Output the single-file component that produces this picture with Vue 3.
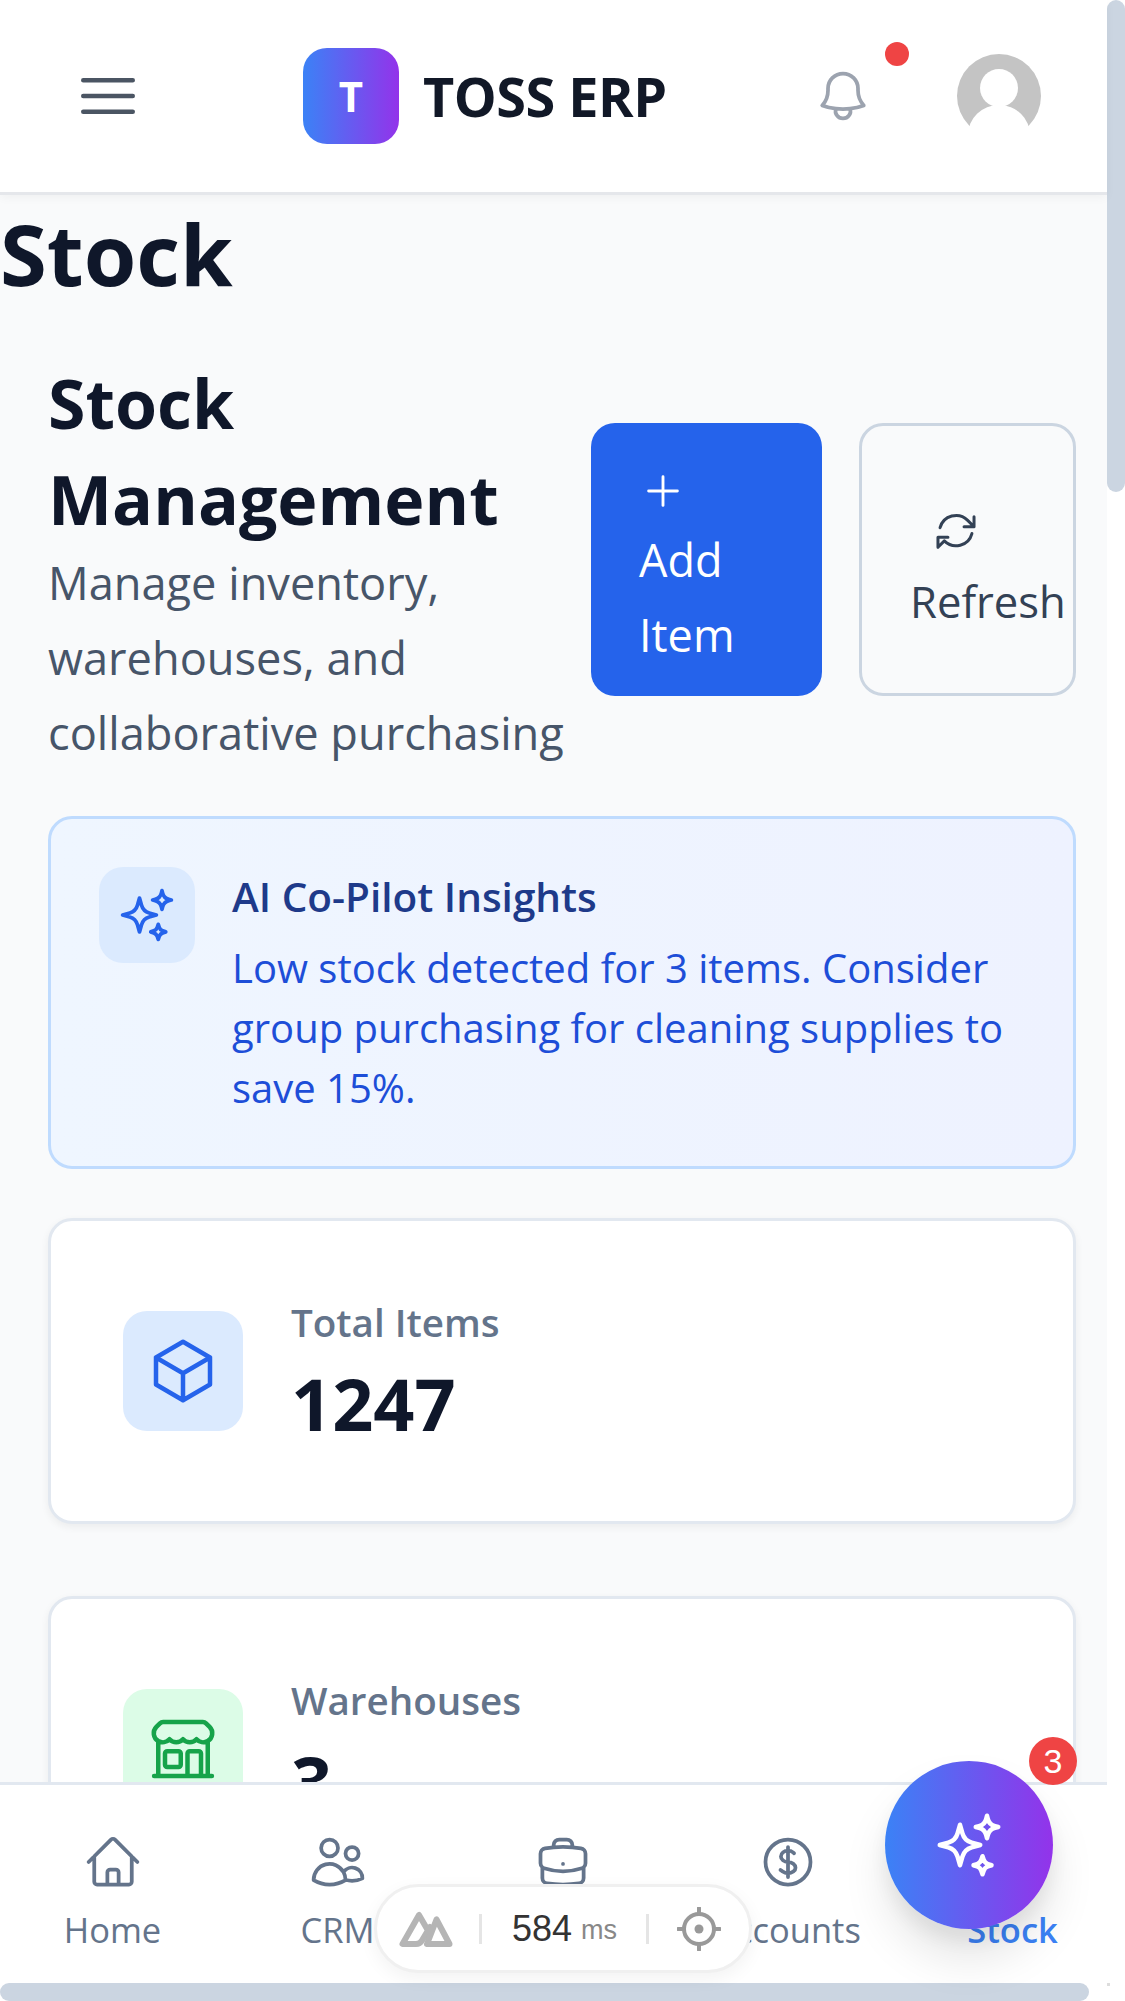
<script setup>
// heroicons outline paths
const icons = {
  home: 'm2.25 12 8.954-8.955c.44-.439 1.152-.439 1.591 0L21.75 12M4.5 9.75v10.125c0 .621.504 1.125 1.125 1.125H9.75v-4.875c0-.621.504-1.125 1.125-1.125h2.25c.621 0 1.125.504 1.125 1.125V21h4.125c.621 0 1.125-.504 1.125-1.125V9.75M8.25 21h8.25',
  users: 'M15 19.128a9.38 9.38 0 0 0 2.625.372 9.337 9.337 0 0 0 4.121-.952 4.125 4.125 0 0 0-7.533-2.493M15 19.128v-.003c0-1.113-.285-2.16-.786-3.07M15 19.128v.106A12.318 12.318 0 0 1 8.624 21c-2.331 0-4.512-.645-6.374-1.766l-.001-.109a6.375 6.375 0 0 1 11.964-3.07M12 6.375a3.375 3.375 0 1 1-6.75 0 3.375 3.375 0 0 1 6.75 0Zm8.25 2.25a2.625 2.625 0 1 1-5.25 0 2.625 2.625 0 0 1 5.25 0Z',
  briefcase: 'M20.25 14.15v4.25c0 1.094-.787 2.036-1.872 2.18-2.087.277-4.216.42-6.378.42s-4.291-.143-6.378-.42c-1.085-.144-1.872-1.086-1.872-2.18v-4.25m16.5 0a2.18 2.18 0 0 0 .75-1.661V8.706c0-1.081-.768-2.015-1.837-2.175a48.114 48.114 0 0 0-3.413-.387m4.5 8.006c-.194.165-.42.295-.673.38A23.978 23.978 0 0 1 12 15.75c-2.648 0-5.195-.429-7.577-1.22a2.016 2.016 0 0 1-.673-.38m0 0A2.18 2.18 0 0 1 3 12.489V8.706c0-1.081.768-2.015 1.837-2.175a48.111 48.111 0 0 1 3.413-.387m7.5 0V5.25A2.25 2.25 0 0 0 13.5 3h-3a2.25 2.25 0 0 0-2.25 2.25v.894m7.5 0a48.667 48.667 0 0 0-7.5 0M12 12.75h.008v.008H12v-.008Z',
  dollar: 'M12 6v12m-3-2.818.879.659c1.171.879 3.07.879 4.242 0 1.172-.879 1.172-2.303 0-3.182C13.536 12.219 12.768 12 12 12c-.725 0-1.45-.22-2.003-.659-1.106-.879-1.106-2.303 0-3.182s2.9-.879 4.006 0l.415.33M21 12a9 9 0 1 1-18 0 9 9 0 0 1 18 0Z',
  cube: 'm21 7.5-9-5.25L3 7.5m18 0-9 5.25m9-5.25v9l-9 5.25M3 7.5l9 5.25M3 7.5v9l9 5.25m0-9v9',
  store: 'M13.5 21v-7.5a.75.75 0 0 1 .75-.75h3a.75.75 0 0 1 .75.75V21m-4.5 0H2.36m11.14 0H18m0 0h3.64m-1.39 0V9.349M3.75 21V9.349m0 0a3.001 3.001 0 0 0 3.75-.615A2.993 2.993 0 0 0 9.75 9.75c.896 0 1.7-.393 2.25-1.016a2.993 2.993 0 0 0 2.25 1.016c.896 0 1.7-.393 2.25-1.015a3.001 3.001 0 0 0 3.75.614m-16.5 0a3.004 3.004 0 0 1-.621-4.72l1.189-1.19A1.5 1.5 0 0 1 5.378 3h13.243a1.5 1.5 0 0 1 1.06.44l1.19 1.189a3 3 0 0 1-.621 4.72M6.75 18h3.75a.75.75 0 0 0 .75-.75V13.5a.75.75 0 0 0-.75-.75H6.75a.75.75 0 0 0-.75.75v3.75c0 .414.336.75.75.75Z',
  sparkles: 'M9.813 15.904 9 18.75l-.813-2.846a4.5 4.5 0 0 0-3.09-3.09L2.25 12l2.846-.813a4.5 4.5 0 0 0 3.09-3.09L9 5.25l.813 2.846a4.5 4.5 0 0 0 3.09 3.09L15.75 12l-2.846.813a4.5 4.5 0 0 0-3.09 3.09ZM18.259 8.715 18 9.75l-.259-1.035a3.375 3.375 0 0 0-2.455-2.456L14.25 6l1.036-.259a3.375 3.375 0 0 0 2.455-2.456L18 2.25l.259 1.035a3.375 3.375 0 0 0 2.456 2.456L21.75 6l-1.035.259a3.375 3.375 0 0 0-2.456 2.456ZM16.894 20.567 16.5 21.75l-.394-1.183a2.25 2.25 0 0 0-1.423-1.423L13.5 18.75l1.183-.394a2.25 2.25 0 0 0 1.423-1.423l.394-1.183.394 1.183a2.25 2.25 0 0 0 1.423 1.423l1.183.394-1.183.394a2.25 2.25 0 0 0-1.423 1.423Z',
  bell: 'M14.857 17.082a23.848 23.848 0 0 0 5.454-1.31A8.967 8.967 0 0 1 18 9.75V9A6 6 0 0 0 6 9v.75a8.967 8.967 0 0 1-2.312 6.022c1.733.64 3.56 1.085 5.455 1.31m5.714 0a24.255 24.255 0 0 1-5.714 0m5.714 0a3 3 0 1 1-5.714 0',
  menu: 'M3.75 6.75h16.5M3.75 12h16.5m-16.5 5.25h16.5',
  plus: 'M12 4.5v15m7.5-7.5h-15',
  refresh: 'M16.023 9.348h4.992v-.001M2.985 19.644v-4.992m0 0h4.992m-4.993 4.992 3.181-3.183a8.25 8.25 0 0 0 13.803-3.7M4.031 9.865a8.25 8.25 0 0 1 13.803-3.7l3.181 3.182m0-4.991v4.99',
};

const stats = [
  { label: 'Total Items', value: '1247', icon: 'cube', tone: 'blue' },
  { label: 'Warehouses', value: '3', icon: 'store', tone: 'green' },
];

const navItems = [
  { label: 'Home', icon: 'home' },
  { label: 'CRM', icon: 'users' },
  { label: 'Sales', icon: 'briefcase' },
  { label: 'Accounts', icon: 'dollar' },
  { label: 'Stock', icon: 'cube', active: true },
];
</script>

<template>
  <div class="screen">
    <div class="view">
      <header class="topbar">
        <svg class="menu-icon" viewBox="0 0 24 24"><path :d="icons.menu" /></svg>
        <div class="brand">
          <div class="brand-mark">T</div>
          <span class="brand-name">TOSS ERP</span>
        </div>
        <div class="top-actions">
          <div class="bell">
            <svg viewBox="0 0 24 24"><path :d="icons.bell" /></svg>
            <span class="bell-dot"></span>
          </div>
          <svg class="avatar" viewBox="0 0 84 84">
            <circle cx="42" cy="42" r="42" fill="#c4c4c4" />
            <circle cx="42" cy="34" r="19" fill="#fff" />
            <ellipse cx="42" cy="81" rx="31" ry="30" fill="#fff" />
            <rect x="0" y="73" width="84" height="11" fill="#fff" />
          </svg>
        </div>
      </header>

      <main class="content">
        <h1 class="page-title">Stock</h1>
        <section class="section">
          <div class="head-row">
            <div class="head-text">
              <h2>Stock Management</h2>
              <p>Manage inventory, warehouses, and collaborative purchasing</p>
            </div>
            <div class="head-actions">
              <button class="btn btn-primary">
                <svg viewBox="0 0 24 24"><path :d="icons.plus" /></svg>
                <span>Add Item</span>
              </button>
              <button class="btn btn-outline">
                <svg viewBox="0 0 24 24"><path :d="icons.refresh" /></svg>
                <span>Refresh</span>
              </button>
            </div>
          </div>

          <div class="insight">
            <div class="insight-icon">
              <svg viewBox="0 0 24 24"><path :d="icons.sparkles" /></svg>
            </div>
            <div>
              <h3>AI Co-Pilot Insights</h3>
              <p>Low stock detected for 3 items. Consider group purchasing for cleaning supplies to save 15%.</p>
            </div>
          </div>

          <div v-for="s in stats" :key="s.label" class="stat-card">
            <div class="stat-icon" :class="s.tone">
              <svg viewBox="0 0 24 24"><path :d="icons[s.icon]" /></svg>
            </div>
            <div>
              <div class="stat-label">{{ s.label }}</div>
              <div class="stat-value">{{ s.value }}</div>
            </div>
          </div>
        </section>
      </main>

      <nav class="bottom-nav">
        <div v-for="item in navItems" :key="item.label" class="nav-item" :class="{ active: item.active }">
          <svg viewBox="0 0 24 24"><path :d="icons[item.icon]" /></svg>
          <span>{{ item.label }}</span>
        </div>
      </nav>

      <div class="hbar"><div class="hbar-thumb"></div></div>
    </div>

    <div class="vbar"><div class="vbar-thumb"></div></div>

    <!-- floating AI button -->
    <button class="fab">
      <svg viewBox="0 0 24 24"><path :d="icons.sparkles" /></svg>
      <span class="fab-badge">3</span>
    </button>

    <!-- dev tools pill -->
    <div class="perf-pill">
      <svg class="nuxt-logo" viewBox="0 0 54 36">
        <path d="M31 23 20 4 3.500 33H17Q21 33 23 29.500L31 16" />
        <path d="M28 33H50.500L37.500 8.500Z" />
      </svg>
      <span class="pill-divider"></span>
      <span class="perf-num">584</span>
      <span class="perf-unit">ms</span>
      <span class="pill-divider"></span>
      <svg class="target-icon" viewBox="0 0 44 44">
        <circle cx="22" cy="22" r="15" />
        <circle class="dot" cx="22" cy="22" r="4.500" />
        <path d="M22 1v6M22 37v6M1 22h6M37 22h6" />
      </svg>
    </div>
    <span class="corner-dot"></span>
  </div>
</template>

<style>
html, body {
  margin: 0;
  background: #fff;
}
</style>

<style scoped>
.screen {
  position: relative;
  display: flex;
  width: 1125px;
  height: 2001px;
  overflow: hidden;
  background: #fff;
  font-family: "Open Sans", "Noto Sans", sans-serif;
  color: #0f172a;
}

svg {
  fill: none;
  stroke: currentColor;
  stroke-width: 1.5;
  stroke-linecap: round;
  stroke-linejoin: round;
}

.view {
  display: flex;
  flex-direction: column;
  width: 1107px;
  height: 2001px;
}

/* header */
.topbar {
  position: relative;
  z-index: 2;
  display: flex;
  align-items: center;
  flex-shrink: 0;
  padding: 48px 66px 48px 72px;
  background: #fff;
  border-bottom: 3px solid #e5e7eb;
  box-shadow: 0 3px 9px rgba(0, 0, 0, 0.04);
}

.menu-icon {
  width: 72px;
  height: 72px;
  color: #4b5563;
}

.brand {
  display: flex;
  align-items: center;
  gap: 24px;
  margin-left: 159px;
}

.brand-mark {
  width: 96px;
  height: 96px;
  border-radius: 24px;
  background: linear-gradient(to right, #3b82f6, #9333ea);
  color: #fff;
  font-size: 42px;
  font-weight: 700;
  line-height: 96px;
  text-align: center;
}

.brand-name {
  font-size: 54px;
  font-weight: 700;
  line-height: 72px;
  letter-spacing: -0.5px;
  color: #111827;
}

.top-actions {
  display: flex;
  align-items: center;
  gap: 84px;
  margin-left: auto;
}

.bell {
  position: relative;
  width: 60px;
  height: 60px;
  color: #9ca3af;
}

.bell svg {
  display: block;
  width: 60px;
  height: 60px;
}

.bell-dot {
  position: absolute;
  left: 72px;
  top: -24px;
  width: 24px;
  height: 24px;
  border-radius: 50%;
  background: #ef4444;
}

.avatar {
  display: block;
  width: 84px;
  height: 84px;
  stroke: none;
}

/* main area */
.content {
  flex: 1;
  min-height: 0;
  overflow: hidden;
  background: #f9fafb;
}

.page-title {
  margin: 10px 0 0;
  font-size: 85px;
  font-weight: 700;
  line-height: 96px;
}

.section {
  padding: 54px 31px 0 48px;
}

.head-row {
  display: flex;
  align-items: flex-start;
  gap: 10px;
  margin-bottom: 46px;
}

.head-text {
  flex: 1;
  min-width: 0;
}

.head-text h2 {
  margin: 0 0 -2px;
  font-size: 68px;
  font-weight: 700;
  line-height: 96px;
}

.head-text p {
  margin: 0;
  font-size: 45.2px;
  line-height: 75px;
  color: #475569;
}

.head-actions {
  display: flex;
  gap: 37px;
  margin-top: 68px;
}

.btn {
  display: flex;
  flex-direction: column;
  justify-content: center;
  align-items: flex-start;
  box-sizing: border-box;
  height: 273px;
  border-radius: 24px;
  font-family: inherit;
  font-size: 45px;
  line-height: 75px;
  text-align: left;
}

.btn svg {
  display: block;
  width: 48px;
  height: 48px;
  margin: 21px 0 8px;
}

.btn-primary {
  width: 231px;
  padding: 24px 48px;
  border: none;
  background: #2563eb;
  color: #fff;
}

.btn-outline {
  width: 217px;
  padding: 27px 48px 21px;
  border: 3px solid #cbd5e1;
  background: #f9fafb;
  color: #334155;
  font-size: 43.6px;
  white-space: nowrap;
}

.btn-outline svg {
  margin-left: 22px;
}

.insight {
  display: flex;
  gap: 37px;
  margin-bottom: 49px;
  padding: 48px;
  border: 3px solid #bfdbfe;
  border-radius: 24px;
  background: linear-gradient(to right, #eff6ff, #eef2ff);
}

.insight-icon {
  display: flex;
  align-items: center;
  justify-content: center;
  flex-shrink: 0;
  width: 96px;
  height: 96px;
  border-radius: 24px;
  background: #dbeafe;
  color: #2563eb;
}

.insight-icon svg {
  width: 60px;
  height: 60px;
}

.insight h3 {
  margin: 0 0 11px;
  font-size: 40.5px;
  font-weight: 600;
  line-height: 60px;
  color: #1e3a8a;
}

.insight p {
  margin: 0;
  font-size: 40px;
  line-height: 60px;
  color: #1d4ed8;
}

.stat-card {
  display: flex;
  align-items: center;
  gap: 48px;
  margin-bottom: 72px;
  padding: 70px 72px;
  border: 3px solid #e2e8f0;
  border-radius: 24px;
  background: #fff;
  box-shadow: 0 3px 9px rgba(0, 0, 0, 0.06);
}

.stat-icon {
  display: flex;
  align-items: center;
  justify-content: center;
  flex-shrink: 0;
  width: 120px;
  height: 120px;
  border-radius: 24px;
}

.stat-icon svg {
  width: 72px;
  height: 72px;
}

.stat-icon.blue {
  background: #dbeafe;
  color: #2563eb;
}

.stat-icon.green {
  background: #dcfce7;
  color: #16a34a;
}

.stat-label {
  padding-top: 1px;
  margin-bottom: 3px;
  font-size: 38.6px;
  font-weight: 600;
  line-height: 60px;
  color: #64748b;
}

.stat-value {
  font-size: 72px;
  font-weight: 700;
  line-height: 96px;
}

/* bottom navigation */
.bottom-nav {
  position: relative;
  z-index: 2;
  display: grid;
  flex-shrink: 0;
  grid-template-columns: repeat(5, 225px);
  box-sizing: border-box;
  height: 201px;
  padding: 47px 0 0;
  overflow: hidden;
  background: #fff;
  border-top: 3px solid #e2e8f0;
}

.nav-item {
  display: flex;
  flex-direction: column;
  align-items: center;
  gap: 11px;
  font-size: 34.5px;
  line-height: 54px;
  color: #64748b;
}

.nav-item svg {
  display: block;
  width: 60px;
  height: 60px;
}

.nav-item.active {
  color: #3b82f6;
  font-weight: 600;
}

/* scrollbars */
.hbar {
  flex-shrink: 0;
  height: 18px;
  background: #fff;
}

.hbar-thumb {
  width: 1089px;
  height: 18px;
  border-radius: 9px;
  background: #cbd5e1;
}

.vbar {
  width: 18px;
  background: #fff;
}

.vbar-thumb {
  height: 492px;
  border-radius: 9px;
  background: #cbd5e1;
}

.corner-dot {
  position: absolute;
  left: 1107px;
  top: 1983px;
  width: 3px;
  height: 3px;
  background: #ddd;
}

/* floating things */
.fab {
  position: absolute;
  z-index: 4;
  left: 885px;
  top: 1761px;
  display: flex;
  align-items: center;
  justify-content: center;
  width: 168px;
  height: 168px;
  padding: 0;
  border: none;
  border-radius: 50%;
  background: linear-gradient(to right, #3b82f6, #9333ea);
  color: #fff;
  box-shadow: 0 30px 45px rgba(0, 0, 0, 0.1), 0 12px 18px rgba(0, 0, 0, 0.06);
}

.fab > svg {
  width: 72px;
  height: 72px;
}

.fab-badge {
  position: absolute;
  right: -24px;
  top: -24px;
  width: 48px;
  height: 48px;
  border-radius: 50%;
  background: #ef4444;
  font-family: inherit;
  font-size: 34px;
  line-height: 48px;
  text-align: center;
  color: #fff;
}

.perf-pill {
  position: absolute;
  z-index: 3;
  left: 374px;
  top: 1884px;
  display: flex;
  align-items: center;
  box-sizing: border-box;
  width: 378px;
  height: 89px;
  padding-left: 22px;
  border: 3px solid #f0f0f0;
  border-radius: 45px;
  background: #fff;
  box-shadow: 0 6px 18px rgba(0, 0, 0, 0.05);
  font-family: "Liberation Sans", Arial, sans-serif;
}

.nuxt-logo {
  width: 54px;
  height: 36px;
  color: #b5b5b5;
  stroke-width: 6;
}

.pill-divider {
  width: 3px;
  height: 30px;
  margin-left: 26px;
  background: #e5e5e5;
}

.perf-num {
  margin-left: 30px;
  font-size: 36px;
  color: #333;
}

.perf-unit {
  margin-left: 9px;
  margin-top: 4px;
  font-size: 27px;
  color: #888;
}

.perf-unit + .pill-divider {
  margin-left: 29px;
}

.target-icon {
  width: 44px;
  height: 44px;
  margin-left: 28px;
  color: #999;
  stroke-width: 4;
}

.target-icon .dot {
  fill: currentColor;
  stroke: none;
}
</style>
